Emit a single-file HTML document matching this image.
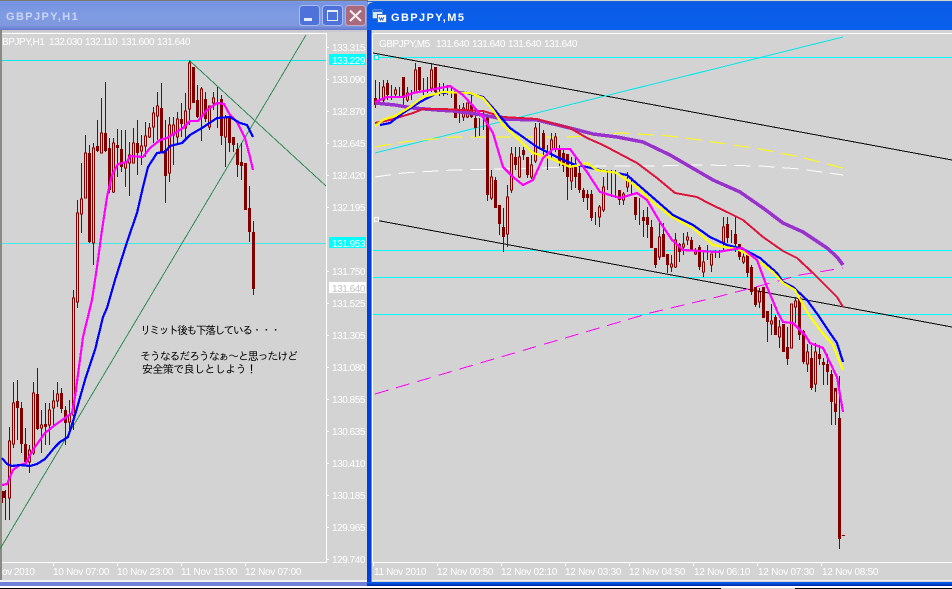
<!DOCTYPE html>
<html><head><meta charset="utf-8"><style>
html,body{margin:0;padding:0;background:#fff}
svg{display:block}
.p{font:10px "Liberation Sans",sans-serif;fill:#fff;letter-spacing:-.45px}
.t{font:bold 11px "Liberation Sans",sans-serif;letter-spacing:1.4px}
.j{font:11px "IPAGothic","Noto Sans CJK JP",sans-serif;fill:#000}
.c path{shape-rendering:crispEdges}
</style></head><body>
<svg width="952" height="589" viewBox="0 0 952 589" xmlns="http://www.w3.org/2000/svg">
<defs>
<linearGradient id="ti" x1="0" y1="0" x2="0" y2="1"><stop offset="0" stop-color="#7e9ae6"/><stop offset=".1" stop-color="#7593e2"/><stop offset=".5" stop-color="#7f9ce2"/><stop offset=".85" stop-color="#7f98de"/><stop offset="1" stop-color="#6477cc"/></linearGradient>
<linearGradient id="ta" x1="0" y1="0" x2="0" y2="1"><stop offset="0" stop-color="#0a5ae4"/><stop offset=".12" stop-color="#0a6af8"/><stop offset=".5" stop-color="#0258e4"/><stop offset=".9" stop-color="#0458e8"/><stop offset="1" stop-color="#003cc8"/></linearGradient>
<linearGradient id="tb" x1="0" y1="0" x2="0" y2="1"><stop offset="0" stop-color="#0a64f0"/><stop offset=".5" stop-color="#0048d0"/><stop offset="1" stop-color="#00249c"/></linearGradient>
</defs>
<rect width="952" height="589" fill="#d3d3d3"/>

<!-- left window frame -->
<rect x="0" y="0" width="368" height="30" fill="url(#ti)"/>
<rect x="0" y="0" width="368" height="1" fill="#7a7a70"/>
<rect x="0" y="30" width="2" height="552" fill="#8a8a80"/>
<rect x="2" y="30" width="366" height="2" fill="#c8c8d0"/>
<rect x="0" y="580" width="368" height="2" fill="#eef0f4"/>
<rect x="0" y="582" width="368" height="4" fill="#6f80d6"/>
<text class="t" x="6" y="20" fill="#c9d5f5">GBPJPY,H1</text>
<g>
<rect x="299.500" y="5.500" width="20" height="20" rx="3" fill="#4f72da" stroke="#a9bbee"/>
<rect x="304" y="18" width="8" height="3" fill="#e6ecfa"/>
<rect x="322.500" y="5.500" width="20" height="20" rx="3" fill="#4f72da" stroke="#a9bbee"/>
<rect x="327.500" y="10.500" width="10" height="10" fill="none" stroke="#e6ecfa"/><rect x="327" y="10" width="11" height="2" fill="#e6ecfa"/>
<rect x="345.500" y="5.500" width="20" height="20" rx="3" fill="#a86a7c" stroke="#c8a8c0"/>
<path d="M350 10.500L361 21M361 10.500L350 21" stroke="#f4ecf0" stroke-width="2.200" fill="none"/>
</g>

<!-- left chart -->
<path d="M326.500 33V562.500H2" fill="none" stroke="#fff"/><path d="M2 33.500H326" stroke="#fff"/>
<rect x="2" y="60" width="324" height="1" fill="#00e8e8"/>
<rect x="2" y="243" width="324" height="1" fill="#40e8e8"/>
<g class="c">
<path d="M0 549L306 35" stroke="#2e8b57" fill="none"/>
<path d="M190 61L326 186" stroke="#2e8b57" fill="none"/>

<g fill="none" stroke="#800000">
<path d="M253.500 221V295M249.500 186V242M245.500 163V210M241.500 143V180M237.500 143V177M233.500 137V152M229.500 115V152M225.500 115V167M221.500 95V145M217.500 87V128M213.500 92V110M209.500 106V130M205.500 92V122M201.500 87V141M197.500 85V118M193.500 67V103M189.500 60V125M185.500 93V140M181.500 103V137M177.500 112V145M173.500 117V165M169.500 117V182M165.500 120V203M161.500 83V152M157.500 92V140M153.500 107V143M149.500 123V138M145.500 122V157M141.500 135V165M137.500 120V175M133.500 128V163M129.500 142V196M125.500 130V187M121.500 130V172M117.500 129V177M113.500 138V193M109.500 138V193M105.500 82V152M101.500 98V153M97.500 120V152M93.500 143V265M89.500 145V243M85.500 135V198M81.500 163V233M77.500 200V308M73.500 290V430M69.500 400V433M65.500 406V445M61.500 388V413M57.500 382V407M53.500 390V425M49.500 403V445M45.500 403V445M41.500 410V453M37.500 368V430M33.500 382V455M29.500 445V473M25.500 428V465M21.500 402V453M17.500 380V440M13.500 382V448M9.500 427V520M5.500 490V520M2.500 491V503"/>
<path stroke-width="3" d="M253.500 232V289M249.500 208V232M245.500 163V210M241.500 162V166M237.500 149V165M233.500 137V145M229.500 117V143M221.500 99V136M217.500 102V104M205.500 99V119M197.500 100V117M193.500 67V103M181.500 119V124M165.500 150V176M161.500 108V152M137.500 143V153M121.500 149V167M117.500 145V148M109.500 148V190M105.500 133V151M97.500 146V151M89.500 153V242M65.500 410V423M61.500 393V409M45.500 424V427M37.500 394V429M25.500 444V462M21.500 408V444M17.500 401V408M3.500 491V498"/>
<path fill="#d3d3d3" d="M224.500 117h2V137h-2zM212.500 98h2V103h-2zM208.500 106h2V127h-2zM200.500 89h2V117h-2zM188.500 63h2V109h-2zM184.500 111h2V128h-2zM176.500 119h2V137h-2zM172.500 125h2V135h-2zM168.500 125h2V173h-2zM156.500 106h2V116h-2zM152.500 113h2V127h-2zM148.500 128h2V137h-2zM144.500 136h2V146h-2zM140.500 146h2V151h-2zM132.500 143h2V163h-2zM128.500 155h2V163h-2zM124.500 163h2V168h-2zM112.500 143h2V192h-2zM100.500 133h2V153h-2zM92.500 148h2V243h-2zM84.500 153h2V198h-2zM80.500 199h2V214h-2zM76.500 213h2V302h-2zM72.500 298h2V415h-2zM68.500 415h2V422h-2zM56.500 394h2V401h-2zM52.500 401h2V408h-2zM48.500 410h2V425h-2zM40.500 425h2V428h-2zM32.500 393h2V453h-2zM28.500 450h2V462h-2zM12.500 403h2V444h-2zM8.500 441h2V498h-2z"/>
</g>
<path fill="none" stroke="#ff00ff" stroke-width="2.200" d="M253 170L250 157L245 138L237 122L230 115L224 104L217 103L207 110L198 121L190 121L183 128L167 138L160 140L150 148L143 157L130 156L127 162L118 164L112 175L107 197L102 230L97 267L92 300L83 337L75 397L72 413L65 418L55 425L45 433L35 447L30 455L26 463L20 465L13 470L7 484L2 485"/>
<path fill="none" stroke="#0000ff" stroke-width="2.200" d="M253 137L247 125L240 123L230 117L217 118L202 128L190 135L182 143L170 146L165 152L157 153L148 167L143 187L137 213L127 242L115 280L107 308L103 317L95 350L85 380L75 415L68 437L60 442L55 447L45 459L37 464L30 466L20 465L12 466L7 464L2 458"/>
</g>

<!-- left labels -->
<text class="p" x="2" y="45">BPJPY,H1</text><text class="p" x="49" y="45">132.030</text><text class="p" x="85" y="45">132.110</text><text class="p" x="121" y="45">131.600</text><text class="p" x="157" y="45">131.640</text>
<path d="M326 47.500h3M326 79.500h3M326 111.500h3M326 143.500h3M326 175.500h3M326 207.500h3M326 271.500h3M326 303.500h3M326 335.500h3M326 367.500h3M326 399.500h3M326 431.500h3M326 463.500h3M326 495.500h3M326 527.500h3M326 559.500h3" stroke="#fff"/>
<g class="p">
<text class="p" x="332" y="51">133.315</text><text class="p" x="332" y="83">133.090</text><text class="p" x="332" y="115">132.870</text><text class="p" x="332" y="147">132.645</text><text class="p" x="332" y="179">132.420</text><text class="p" x="332" y="211">132.195</text><text class="p" x="332" y="275">131.750</text><text class="p" x="332" y="307">131.525</text><text class="p" x="332" y="339">131.305</text><text class="p" x="332" y="371">131.080</text><text class="p" x="332" y="403">130.855</text><text class="p" x="332" y="435">130.635</text><text class="p" x="332" y="467">130.410</text><text class="p" x="332" y="499">130.185</text><text class="p" x="332" y="531">129.965</text><text class="p" x="332" y="563">129.740</text>
</g>
<rect x="329" y="54" width="37" height="11" fill="#00ffff"/><text class="p" x="332" y="64">133.229</text>
<rect x="329" y="237" width="37" height="11" fill="#00ffff"/><text class="p" x="332" y="247">131.953</text>
<rect x="329" y="282" width="37" height="11" fill="#fff"/><text class="p" x="332" y="292" style="fill:#c0c0c0">131.640</text>
<path d="M53.500 562v4M117.500 562v4M181.500 562v4M245.500 562v4" stroke="#fff"/>
<text class="p" x="2" y="575">ov 2010</text><text class="p" x="53" y="575" textLength="56">10 Nov 07:00</text><text class="p" x="117" y="575" textLength="56">10 Nov 23:00</text><text class="p" x="181" y="575" textLength="56">11 Nov 15:00</text><text class="p" x="245" y="575" textLength="56">12 Nov 07:00</text>

<text class="j" x="140" y="334" textLength="141">リミット後も下落している・・・</text>
<text class="j" x="140" y="360" textLength="158">そうなるだろうなぁ〜と思ったけど</text>
<text class="j" x="142" y="373" textLength="115">安全策で良しとしよう！</text>

<!-- right window frame -->
<path d="M367 589V9Q367 2 375 2H952V30H367Z" fill="url(#ta)"/>
<rect x="367" y="1" width="585" height="1" fill="#1a66d8"/>
<rect x="367" y="30" width="4" height="552" fill="#0040d8"/>
<rect x="371" y="30" width="1" height="552" fill="#8a8a8a"/>
<rect x="372" y="30" width="580" height="3" fill="#d3d3d3"/>
<rect x="367" y="582" width="585" height="4" fill="url(#tb)"/>
<rect x="372" y="580" width="580" height="1" fill="#eef0f4"/>
<g>
<rect x="373" y="10" width="9" height="8" fill="#d8e6fa" stroke="#ffffff" stroke-width=".5"/>
<rect x="373" y="10" width="9" height="2" fill="#2f6fd8"/>
<rect x="377.500" y="14.500" width="9" height="8" fill="#f4f8ff" stroke="#3a6ec4"/>
<path d="M379 17l1.500 3 1-2 1 2 1.500-3" fill="none" stroke="#2a66c8"/>
</g>
<text class="t" x="391" y="21" fill="#fff">GBPJPY,M5</text>

<!-- right chart -->
<rect x="373" y="33" width="579" height="530" fill="#d3d3d3"/>
<rect x="373" y="33" width="579" height="1" fill="#fff"/>
<rect x="372" y="34" width="1" height="529" fill="#fff"/>
<rect x="373" y="562" width="579" height="1" fill="#fff"/>
<g fill="#00ffff"><rect x="373" y="57" width="579" height="1"/><rect x="373" y="250" width="579" height="1"/><rect x="373" y="277" width="579" height="1"/><rect x="373" y="314" width="579" height="1"/></g>
<g class="c">
<path d="M373 53L952 160M375 220L952 327" stroke="#000" fill="none"/>
<path d="M375 153L843 37" stroke="#00e8e8" fill="none"/>
<path d="M375 147L403 142L453 137L503 137L570 137L620 133L670 136L700 140L760 149L800 157L843 168" fill="none" stroke="#ffff00" stroke-dasharray="16 8"/>
<path d="M375 177L403 173L453 170L537 168L603 166L653 166L700 165L760 166L800 169L843 175" fill="none" stroke="#fff" stroke-dasharray="16 8"/>
<path d="M375 394L650 313L717 297L763 285L800 275L843 268" fill="none" stroke="#ff00ff" stroke-dasharray="14 8"/>
</g>
<rect x="374.500" y="55.500" width="4" height="4" fill="#fff" stroke="#00e8e8"/>
<rect x="374.500" y="217.500" width="4" height="4" fill="#d3d3d3" stroke="#fff"/>

<g class="c">
<g fill="none" stroke="#800000">
<path d="M375.500 80V108M379.500 82V105M383.500 80V102M387.500 80V100M391.500 85V100M395.500 87V97M399.500 87V97M403.500 77V105M407.500 87V102M411.500 90V100M415.500 63V93M419.500 67V93M423.500 78V95M427.500 77V93M431.500 63V92M435.500 67V94M439.500 83V96M443.500 83V96M447.500 85V95M451.500 88V98M455.500 93V118M459.500 105V123M463.500 103V121M467.500 103V118M471.500 95V118M475.500 110V137M479.500 118V136M483.500 110V130M487.500 116V201M491.500 170V200M495.500 177V208M499.500 205V235M503.500 208V252M507.500 185V247M511.500 147V193M515.500 147V170M519.500 147V178M523.500 147V160M527.500 157V178M531.500 155V179M535.500 123V163M539.500 123V147M543.500 130V155M547.500 145V170M551.500 133V160M555.500 133V152M559.500 145V166M563.500 150V172M567.500 154V200M571.500 157V190M575.500 158V188M579.500 163V193M583.500 188V202M587.500 190V210M591.500 190V221M595.500 212V225M599.500 205V227M603.500 177V212M607.500 170V190M611.500 170V197M615.500 170V198M619.500 190V205M623.500 192V205M627.500 172V192M631.500 180V195M635.500 197V220M639.500 198V225M643.500 210V237M647.500 207V238M651.500 220V248M655.500 248V268M659.500 223V260M663.500 223V257M667.500 254V273M671.500 255V272M675.500 233V268M679.500 243V262M683.500 233V255M687.500 232V245M691.500 237V250M695.500 248V255M699.500 245V270M703.500 250V277M707.500 245V260M711.500 254V272M715.500 250V258M719.500 250V258M723.500 217V252M727.500 217V243M731.500 230V243M735.500 217V252M739.500 244V260M743.500 253V264M747.500 253V277M751.500 265V295M755.500 287V307M759.500 288V308M763.500 287V318M767.500 311V342M771.500 304V335M775.500 315V335M779.500 320V348M783.500 324V352M787.500 327V365M791.500 304V348M795.500 297V323M799.500 297V340M803.500 330V364M807.500 344V372M811.500 345V390M815.500 343V392M819.500 345V365M823.500 358V385M827.500 354V385M831.500 370V425M835.500 388V425M839.500 376V430M839.500 539V549"/>
<path stroke-width="3" d="M375.500 98V105M387.500 83V95M403.500 77V98M419.500 67V90M435.500 67V92M455.500 93V118M471.500 105V117M475.500 118V128M487.500 116V195M495.500 180V208M499.500 205V224M503.500 227V237M515.500 157V165M523.500 150V155M527.500 157V175M543.500 133V149M559.500 150V162M563.500 153V166M567.500 154V177M575.500 167V177M579.500 173V190M583.500 190V198M587.500 194V198M591.500 194V218M619.500 190V200M635.500 197V215M643.500 217V221M647.500 217V225M651.500 227V248M655.500 248V265M663.500 234V257M667.500 254V265M679.500 244V252M691.500 240V250M699.500 247V267M727.500 224V238M735.500 234V244M739.500 244V257M747.500 253V273M751.500 267V292M755.500 287V305M763.500 287V318M767.500 311V322M775.500 317V335M783.500 324V352M787.500 347V359M799.500 297V335M803.500 331V362M811.500 358V388M819.500 354V359M823.500 362V365M827.500 364V372M831.500 374V402M835.500 388V412"/>
<path stroke-width="3" d="M839.500 418V539"/>
<path d="M842 535.500h3"/>
<path fill="#d3d3d3" d="M382.500 87h2V100h-2zM394.500 90h2V94h-2zM406.500 93h2V100h-2zM414.500 70h2V92h-2zM430.500 70h2V88h-2zM462.500 108h2V117h-2zM466.500 103h2V117h-2zM490.500 177h2V198h-2zM506.500 197h2V234h-2zM510.500 154h2V190h-2zM518.500 157h2V177h-2zM530.500 165h2V177h-2zM534.500 128h2V161h-2zM550.500 140h2V150h-2zM554.500 137h2V149h-2zM570.500 168h2V181h-2zM598.500 207h2V217h-2zM602.500 187h2V210h-2zM622.500 194h2V200h-2zM626.500 181h2V187h-2zM658.500 237h2V257h-2zM670.500 264h2V267h-2zM674.500 240h2V267h-2zM682.500 244h2V247h-2zM686.500 237h2V240h-2zM694.500 252h2V254h-2zM702.500 262h2V272h-2zM710.500 254h2V265h-2zM722.500 227h2V242h-2zM742.500 257h2V262h-2zM758.500 292h2V302h-2zM770.500 321h2V324h-2zM778.500 327h2V337h-2zM790.500 304h2V348h-2zM794.500 301h2V307h-2zM806.500 352h2V364h-2zM814.500 352h2V384h-2zM834.500 391h2V404h-2z"/>
</g>
<path fill="none" stroke="#9932cc" stroke-width="3.500" d="M375 103L395 105L413 108L437 110L453 111L483 115L503 119L537 120L570 128L593 134L617 137L643 142L670 155L713 180L740 192L763 208L783 223L803 232L827 248L837 257L843 265"/>
<path fill="none" stroke="#dc143c" stroke-width="2" d="M375 123L390 120L413 113L423 109L443 109L483 111L503 117L537 119L570 128L587 138L603 145L637 163L657 178L675 193L697 197L710 204L727 212L743 220L763 237L783 251L797 258L813 273L837 297L843 307"/>
<path fill="none" stroke="#0000ff" stroke-width="2.200" d="M380 125L390 123L403 113L420 102L437 93L463 92L483 97L493 108L510 128L523 137L537 147L557 157L573 164L600 170L627 175L650 195L673 215L693 225L710 237L727 245L743 249L760 258L777 273L783 282L793 287L807 300L818 315L830 333L837 343L843 362"/>
<path fill="none" stroke="#ffff00" stroke-width="2.200" d="M375 126L383 120L397 115L410 107L423 97L443 92L470 93L483 98L493 110L503 125L517 138L533 153L550 158L570 167L587 163L597 170L617 173L637 187L650 200L672 217L693 228L713 245L737 249L753 257L773 272L783 283L795 290L807 312L820 330L833 345L843 370"/>
<path fill="none" stroke="#ff00ff" stroke-width="2.200" d="M375 102L387 97L403 97L413 93L430 90L450 86L463 95L483 117L493 133L503 167L513 177L523 185L533 180L543 158L553 149L570 149L587 172L600 192L620 198L637 193L647 200L660 222L672 240L683 250L717 252L742 248L757 260L767 287L778 313L783 322L793 323L805 335L810 343L823 348L837 377L843 412"/>
</g>

<!-- right labels -->
<text class="p" x="379" y="47">GBPJPY,M5</text><text class="p" x="436" y="47">131.640</text><text class="p" x="472" y="47">131.640</text><text class="p" x="508" y="47">131.640</text><text class="p" x="544" y="47">131.640</text>
<path d="M373.500 562v4M437.500 562v4M501.500 562v4M565.500 562v4M629.500 562v4M693.500 562v4M757.500 562v4M821.500 562v4" stroke="#fff"/>
<text class="p" x="374" y="575" textLength="52">11 Nov 2010</text><text class="p" x="437" y="575" textLength="56">12 Nov 00:50</text><text class="p" x="501" y="575" textLength="56">12 Nov 02:10</text><text class="p" x="565" y="575" textLength="56">12 Nov 03:30</text><text class="p" x="629" y="575" textLength="56">12 Nov 04:50</text><text class="p" x="694" y="575" textLength="56">12 Nov 06:10</text><text class="p" x="758" y="575" textLength="56">12 Nov 07:30</text><text class="p" x="822" y="575" textLength="56">12 Nov 08:50</text>

<!-- bottom strip -->
<rect x="0" y="586" width="952" height="2" fill="#fff"/>
<rect x="0" y="588" width="721" height="1" fill="#000"/>
<rect x="795" y="588" width="157" height="1" fill="#000"/>
</svg>
</body></html>
